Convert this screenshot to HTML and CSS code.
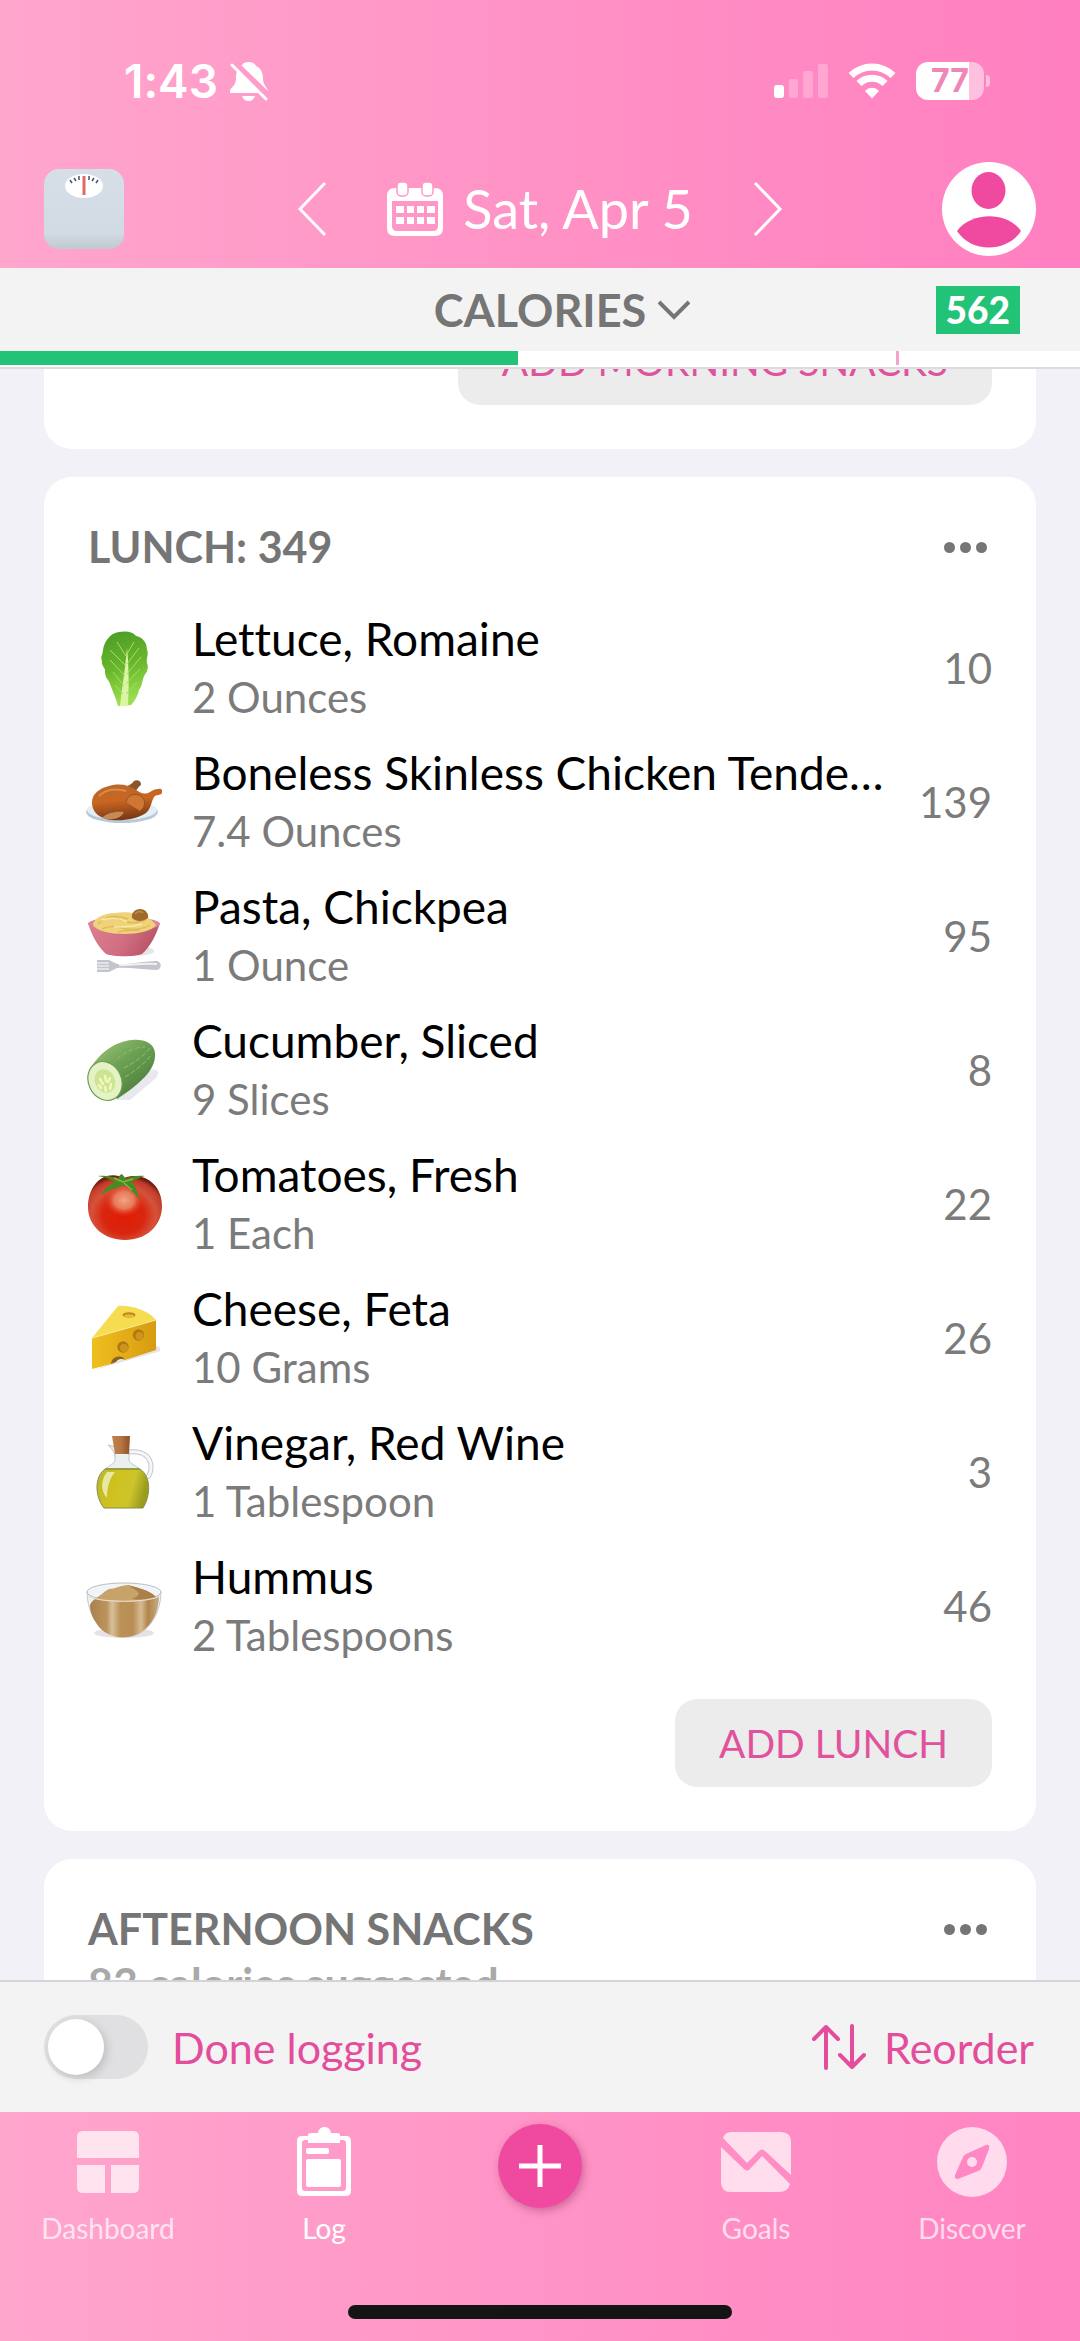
FILE: index.html
```html
<!DOCTYPE html>
<html lang="en">
<head>
  <meta charset="UTF-8" />
  <meta name="viewport" content="width=device-width, initial-scale=1.0"/>
  <title>Food Log</title>
  <link rel="stylesheet" href="styles.css">
</head>
<body>

  <!-- Header -->
  <header class="header">
    <div class="status">
      <span class="time">1:43</span>
      <svg class="bell" width="38" height="40" viewBox="0 0 38 40">
        <path d="M19 1c4 0 6 2 7 4 5 2 7 7 7 13 0 6 4 8 5 12v2H0v-3c2-3 6-5 6-12 0-6 2-11 6-13 1-2 3-3 7-3z" fill="#fff"/>
        <path d="M12 35h13c-1 3-3 5-6.500 5S13 38 12 35z" fill="#fff"/>
        <path d="M3 1l35 34" stroke="#ff9cc9" stroke-width="7"/>
        <path d="M2 4l34 34" stroke="#fff" stroke-width="3" stroke-linecap="round"/>
      </svg>
      <span class="status-right">
        <svg width="54" height="36" viewBox="0 0 54 36" fill="#fff">
          <rect x="0" y="22" width="10" height="13" rx="3"/>
          <g opacity="0.25">
            <rect x="15" y="16" width="9" height="19" rx="2"/>
            <rect x="29" y="8" width="10" height="27" rx="2"/>
            <rect x="44" y="1" width="10" height="34" rx="2"/>
          </g>
        </svg>
        <svg width="48" height="36" viewBox="0 0 48 36" fill="none" stroke="#fff" stroke-width="7">
          <path d="M3 12.500C15 1 33 1 45 12.500"/>
          <path d="M11 20.500c7-7 19-7 26 0"/>
          <path d="M17 28c4-4.500 10-4.500 14 0l-7 7.500z" fill="#fff" stroke="none"/>
        </svg>
        <span class="battery"><span class="battery-body">77</span><span class="battery-tip"></span></span>
      </span>
    </div>

    <div class="date-row">
      <button class="icon-btn left" aria-label="Weigh in">
        <svg width="80" height="80" viewBox="0 0 80 80">
          <defs>
            <linearGradient id="scale" x1="0" y1="0" x2="0" y2="1">
              <stop offset="0" stop-color="#d6dfe8"/><stop offset="0.8" stop-color="#d2dae3"/><stop offset="1" stop-color="#bfcad2"/>
            </linearGradient>
          </defs>
          <rect width="80" height="80" rx="15" fill="url(#scale)"/>
          <ellipse cx="40" cy="17" rx="19" ry="12" fill="#fff"/>
          <path d="M26 11l2 3M30 9l2 3M35 7v4M45 7v4M50 9l-2 3M54 11l-2 3" stroke="#47566a" stroke-width="1.500"/>
          <path d="M40 7v19" stroke="#dc6b67" stroke-width="3"/>
        </svg>
      </button>
      <div class="date-nav">
        <button class="icon-btn" aria-label="Previous day">
          <svg width="30" height="56" viewBox="0 0 30 56" fill="none" stroke="#fff" stroke-width="3"><path d="M28 2L3 28l25 26"/></svg>
        </button>
        <button class="date-btn">
          <svg width="56" height="54" viewBox="0 0 56 54">
            <path d="M8 6h40q8 0 8 8v32q0 8-8 8H8q-8 0-8-8V14q0-8 8-8zM5 19v25q0 5 5 5h36q5 0 5-5V19z" fill="#fff" fill-rule="evenodd"/>
            <rect x="10" y="0" width="11" height="14" rx="4" fill="#fff" stroke="#ff96c7" stroke-width="1.500"/>
            <rect x="35" y="0" width="11" height="14" rx="4" fill="#fff" stroke="#ff96c7" stroke-width="1.500"/>
            <path d="M9 24h8v7H9zM20 24h7v7h-7zM30 24h7v7h-7zM40 24h8v7h-8zM9 35h8v7H9zM20 35h7v7h-7zM30 35h7v7h-7zM40 35h8v7h-8z" fill="#fff"/>
          </svg>
          <span>Sat, Apr 5</span>
        </button>
        <button class="icon-btn" aria-label="Next day">
          <svg width="30" height="56" viewBox="0 0 30 56" fill="none" stroke="#fff" stroke-width="3"><path d="M2 2l25 26L2 54"/></svg>
        </button>
      </div>
      <button class="icon-btn right" aria-label="Profile">
        <svg width="94" height="94" viewBox="0 0 94 94">
          <circle cx="47" cy="47" r="47" fill="#fff"/>
          <ellipse cx="46.500" cy="28.500" rx="17" ry="18.500" fill="#ef4a9f"/>
          <path d="M15 69C29 50 65 49 79 69 65 91 29 91 15 69z" fill="#ef4a9f"/>
        </svg>
      </button>
    </div>
  </header>

  <!-- Calories summary -->
  <section class="summary">
    <div class="summary-row">
      <button class="nutrient">
        CALORIES
        <svg width="32" height="20" viewBox="0 0 32 20" fill="none" stroke="#757575" stroke-width="4"><path d="M1 2l15 15L31 2"/></svg>
      </button>
      <span class="badge">562</span>
    </div>
    <div class="progress">
      <div class="progress-fill" style="width: 48%"></div>
      <div class="progress-mark"></div>
    </div>
  </section>

  <!-- Meals -->
  <main class="meals">
    <section class="card scrolled">
      <div class="card-foot"><button class="add">ADD MORNING SNACKS</button></div>
    </section>

    <section class="card">
      <div class="card-head">
        <h2>LUNCH: 349</h2>
        <button class="dots" aria-label="Lunch options"><i></i><i></i><i></i></button>
      </div>
      <ul class="foods">
        <li class="food">
          <svg class="food-icon" viewBox="0 0 76 76">
            <defs>
              <linearGradient id="leaf" x1="0" y1="0" x2="0.200" y2="1">
                <stop offset="0" stop-color="#4a9a26"/><stop offset="0.550" stop-color="#69b72c"/><stop offset="1" stop-color="#9ade50"/>
              </linearGradient>
            </defs>
            <path d="M33 2c6-1 13-1 17 4 6 1 11 6 11 14 2 4-1 8 0 13 2 5 0 9-3 13-2 6-2 10-5 14-1 6-5 12-8 15l-13 1c-2-8-6-16-8-22-1-4-5-6-5-12 1-4-4-6-3-11-2-4 1-7 1-11C18 12 24 3 33 2z" fill="url(#leaf)"/>
            <path d="M34 76c2-18 5-35 7-58 2 18 2 40 1 58z" fill="#dcf5a4"/>
            <path d="M40 64l11-12M40 54l14-15M41 44l14-17M41 34l12-16M41 24l7-12M38 56L27 42M39 46L24 30M40 36L24 20M40 26l-9-14M37 64l-8-9" stroke="#a9dd6c" stroke-width="1" fill="none"/>
          </svg>
          <div class="food-text"><h3>Lettuce, Romaine</h3><p>2 Ounces</p></div>
          <span class="cals">10</span>
        </li>
        <li class="food">
          <svg class="food-icon" viewBox="0 0 76 76">
            <defs>
              <linearGradient id="bird" x1="0" y1="0" x2="0.200" y2="1">
                <stop offset="0" stop-color="#b9682c"/><stop offset="0.500" stop-color="#c96621"/><stop offset="1" stop-color="#7d3a17"/>
              </linearGradient>
            </defs>
            <ellipse cx="36" cy="48" rx="36" ry="11" fill="#b9cad6"/>
            <ellipse cx="36" cy="46" rx="35" ry="10" fill="#e4eef5"/>
            <path d="M34 24c6-1 11-3 14-7 3-2 7 0 7 3 0 2-2 2-3 4-3 4-5 6-9 8z" fill="#8c552e"/>
            <path d="M6 40c-1-10 8-16 17-18 11-3 20-1 27 4 5 3 8 5 14 2 3-2 5-3 8-3 3-1 5 1 4 4-2 3-5 1-8 4-3 5-3 12-8 16-9 6-22 8-34 7C14 55 7 49 6 40z" fill="url(#bird)"/>
            <path d="M40 38c1-7 9-10 15-6 5 4 5 11-1 15" fill="#cf7634" stroke="#95501f" stroke-width="1"/>
            <path d="M16 54c4-5 14-7 22-6-3 6-10 9-22 6z" fill="#c58a58"/>
            <path d="M13 32c7-7 18-8 27-5" stroke="#dc8b47" stroke-width="2" fill="none"/>
          </svg>
          <div class="food-text"><h3>Boneless Skinless Chicken Tende…</h3><p>7.4 Ounces</p></div>
          <span class="cals">139</span>
        </li>
        <li class="food">
          <svg class="food-icon" viewBox="0 0 76 76">
            <defs>
              <linearGradient id="bowl" x1="0" y1="0" x2="1" y2="0.300">
                <stop offset="0" stop-color="#dc7e8f"/><stop offset="0.600" stop-color="#d16f82"/><stop offset="1" stop-color="#b95468"/>
              </linearGradient>
            </defs>
            <ellipse cx="50" cy="53" rx="18" ry="5" fill="#e6e6e8"/>
            <path d="M2 25c4 14 12 26 18 31 8 3 28 3 36 0 7-6 14-18 18-31z" fill="url(#bowl)"/>
            <ellipse cx="38" cy="26" rx="36" ry="7" fill="#d98797"/>
            <path d="M7 27c0-6 10-12 22-12 10-2 24 0 30 4 5 1 9 5 11 8-8 12-56 12-63 0z" fill="#efd279"/>
            <path d="M12 26c7-8 17-7 23-4s15 4 24 0M16 31c10-5 18-1 25 0s17 0 23-4M20 20c8-3 15-2 22 1M32 34c8-2 14-2 22-2" stroke="#dfbb5c" stroke-width="1.500" fill="none"/>
            <path d="M15 22c9-2 17-3 26 2M28 29c8 0 20 0 28-3" stroke="#fbeaa5" stroke-width="1.500" fill="none"/>
            <path d="M46 20c-1-5 3-9 8-9s9 4 8 9c-5 4-12 4-16 0z" fill="#a2692c"/>
            <path d="M49 16c2-3 6-3 8-1" stroke="#c38e4c" stroke-width="1.500" fill="none"/>
            <path d="M11 62h12l8 4c12 1 26-3 40-3 5 1 5 8 0 9-14 0-28-3-40-2l-8 4H11z" fill="#c3c4cc"/>
            <path d="M11 65h12M11 68h12M11 71h12" stroke="#fff" stroke-width="1.200"/>
            <path d="M33 67c12 0 24-2 38-1" stroke="#f1f1f5" stroke-width="2" fill="none"/>
          </svg>
          <div class="food-text"><h3>Pasta, Chickpea</h3><p>1 Ounce</p></div>
          <span class="cals">95</span>
        </li>
        <li class="food">
          <svg class="food-icon" viewBox="0 0 76 76">
            <defs>
              <linearGradient id="cuke" x1="0" y1="0" x2="0.800" y2="1">
                <stop offset="0" stop-color="#a5c97e"/><stop offset="0.450" stop-color="#6da255"/><stop offset="1" stop-color="#477a38"/>
              </linearGradient>
            </defs>
            <path d="M30 68l34-30c8-2 10 2 6 8L44 68z" fill="#e9e8ee"/>
            <path d="M5 36C13 21 30 9 46 8c12-1 22 3 23 13 1 14-9 27-38 46z" fill="url(#cuke)"/>
            <path d="M31 27c8-7 17-12 28-12M38 36c9-5 19-11 26-20M39 45c10-6 20-14 27-23" stroke="#93bb74" stroke-width="1" fill="none" stroke-dasharray="5 2"/>
            <ellipse cx="19" cy="49" rx="16.500" ry="20" transform="rotate(-25 19 49)" fill="#e4f2c6" stroke="#6f9b54" stroke-width="1.200"/>
            <ellipse cx="19" cy="49" rx="10" ry="12" transform="rotate(-25 19 49)" fill="#cde492"/>
            <path d="M14 47l3 5M19 44l1 5M24 46l-2 4M19 55l1 4M25 52l-1 5M13 53l2 3" stroke="#f3f7bd" stroke-width="2.500" stroke-linecap="round"/>
          </svg>
          <div class="food-text"><h3>Cucumber, Sliced</h3><p>9 Slices</p></div>
          <span class="cals">8</span>
        </li>
        <li class="food">
          <svg class="food-icon" viewBox="0 0 76 76">
            <defs>
              <radialGradient id="tomato" cx="0.480" cy="0.620" r="0.620">
                <stop offset="0" stop-color="#e01c05"/><stop offset="0.450" stop-color="#d9260f"/><stop offset="0.700" stop-color="#d5523b"/><stop offset="0.900" stop-color="#c13c28"/><stop offset="1" stop-color="#6e1b11"/>
              </radialGradient>
              <radialGradient id="shine" cx="0.500" cy="0.450" r="0.500">
                <stop offset="0" stop-color="#f2a585"/><stop offset="0.500" stop-color="#ec8e6d" stop-opacity="0.800"/><stop offset="1" stop-color="#e0280f" stop-opacity="0"/>
              </radialGradient>
            </defs>
            <path d="M38 12c18-7 38 5 38 28 0 20-16 34-37 34S2 60 2 41C2 17 20 3 38 12z" fill="url(#tomato)"/>
            <ellipse cx="38" cy="36" rx="20" ry="17" fill="url(#shine)"/>
            <path d="M12 10c9-1 16 1 21 3-1-2 0-4 3-5l4 5c5-3 12-4 19-3-5 1-9 4-14 6 4 3 7 8 8 18-4-7-9-11-15-15-6 3-14 4-23 10 4-7 9-10 14-13-5-3-10-5-17-6z" fill="#478b22"/>
            <path d="M28 12l9 4 10-3M38 17l8 7" stroke="#82b743" stroke-width="1.500" fill="none"/>
          </svg>
          <div class="food-text"><h3>Tomatoes, Fresh</h3><p>1 Each</p></div>
          <span class="cals">22</span>
        </li>
        <li class="food">
          <svg class="food-icon" viewBox="0 0 76 76">
            <defs>
              <linearGradient id="cheese" x1="0" y1="0" x2="1" y2="0">
                <stop offset="0" stop-color="#efbf1f"/><stop offset="1" stop-color="#d79b12"/>
              </linearGradient>
            </defs>
            <path d="M8 70l62-24c5 1 6 4 2 6z" fill="#e6e5ea"/>
            <path d="M6 38L32 6c12-1 30 4 38 14z" fill="#f6dc51"/>
            <path d="M6 38l64-18v30l-31 10c-1-5-14-3-14 4L6 69z" fill="url(#cheese)"/>
            <path d="M6 38l64-18" stroke="#fae98c" stroke-width="1.200"/>
            <ellipse cx="43" cy="15" rx="6.500" ry="2.800" fill="#bb891b"/>
            <ellipse cx="43" cy="16" rx="5" ry="1.800" fill="#e7bd37"/>
            <circle cx="52.500" cy="35" r="5.700" fill="#b17812"/><circle cx="53.500" cy="36" r="4" fill="#cd961b"/>
            <circle cx="37" cy="47" r="5.700" fill="#b17812"/><circle cx="38" cy="48" r="4" fill="#cd961b"/>
            <path d="M25 64c0-8 12-10 14-4-3-2-7-1-9 2z" fill="#8e6218"/>
          </svg>
          <div class="food-text"><h3>Cheese, Feta</h3><p>10 Grams</p></div>
          <span class="cals">26</span>
        </li>
        <li class="food">
          <svg class="food-icon" viewBox="0 0 76 76">
            <defs>
              <linearGradient id="oil" x1="0" y1="0" x2="1" y2="0.200">
                <stop offset="0" stop-color="#b9b532"/><stop offset="0.400" stop-color="#d0c21d"/><stop offset="0.750" stop-color="#cdc42c"/><stop offset="1" stop-color="#9a9d1c"/>
              </linearGradient>
              <linearGradient id="cork" x1="0" y1="0" x2="1" y2="0">
                <stop offset="0" stop-color="#c1824e"/><stop offset="0.500" stop-color="#b87540"/><stop offset="1" stop-color="#8d5228"/>
              </linearGradient>
            </defs>
            <path d="M43 18c14-2 22 5 22 15 0 5-1 8-4 11" fill="none" stroke="#c3c7cd" stroke-width="5"/>
            <path d="M43 18c14-2 22 5 22 15 0 5-1 8-4 11" fill="none" stroke="#f5f6f8" stroke-width="3"/>
            <path d="M22 11l8 2v12c-1-6-3-9-8-14z" fill="#e8ebee" stroke="#bfc4ca" stroke-width="1"/>
            <path d="M29 18h14v8c1 4 6 5 11 9H19c5-4 9-5 10-9z" fill="#eceff0" stroke="#bec5c7" stroke-width="1"/>
            <path d="M19 35h35c12 8 10 28 3 39H18C9 63 8 43 19 35z" fill="url(#oil)" stroke="#858f46" stroke-width="1"/>
            <path d="M21 38h8c-6 7-8 17-8 26-7-8-6-18 0-26z" fill="#edf0b6" opacity="0.850"/>
            <path d="M20 35h33" stroke="#8f9a36" stroke-width="1.500"/>
            <path d="M26 2h18l-1 18H29z" fill="url(#cork)"/>
          </svg>
          <div class="food-text"><h3>Vinegar, Red Wine</h3><p>1 Tablespoon</p></div>
          <span class="cals">3</span>
        </li>
        <li class="food">
          <svg class="food-icon" viewBox="0 0 76 76">
            <defs>
              <linearGradient id="hummus" x1="0" y1="0" x2="1" y2="0">
                <stop offset="0" stop-color="#a98150"/><stop offset="0.240" stop-color="#bb935c"/><stop offset="0.320" stop-color="#d9c09a"/><stop offset="0.440" stop-color="#bb9157"/><stop offset="0.620" stop-color="#b88e55"/><stop offset="0.740" stop-color="#d6bb94"/><stop offset="0.840" stop-color="#b1854b"/><stop offset="1" stop-color="#c9ab7e"/>
              </linearGradient>
            </defs>
            <ellipse cx="38" cy="65" rx="30" ry="5" fill="#e6e1e4"/>
            <path d="M1 23c0 24 14 46 37 46s37-22 37-46c-8 12-66 12-74 0z" fill="#eef1f3" stroke="#c4c9cf" stroke-width="1"/>
            <path d="M4 37c1-3 4-6 8-8 14 6 42 6 61-1 0 12-4 22-10 29-11 15-37 17-50 2C7 51 4 45 4 37z" fill="url(#hummus)"/>
            <ellipse cx="38" cy="24" rx="37" ry="9" fill="#f1f5f7" stroke="#b6bfc7" stroke-width="1"/>
            <path d="M8 31c7-3 10-8 15-10 6 0 12-4 19-4 9 3 20 4 28 12-13 6-47 6-62 2z" fill="#c7a269"/>
            <path d="M42 17c9 3 20 4 28 12-8 2-18 3-24 2 8-3 9-6 2-10z" fill="#aa8049"/>
            <path d="M2 28c14 7 58 7 72 0" stroke="#e9dfcf" stroke-width="1.200" fill="none"/>
          </svg>
          <div class="food-text"><h3>Hummus</h3><p>2 Tablespoons</p></div>
          <span class="cals">46</span>
        </li>
      </ul>
      <div class="card-foot"><button class="add">ADD LUNCH</button></div>
    </section>

    <section class="card">
      <div class="card-head">
        <h2>AFTERNOON SNACKS</h2>
        <button class="dots" aria-label="Afternoon snacks options"><i></i><i></i><i></i></button>
      </div>
      <p class="suggested">83 calories suggested</p>
    </section>
  </main>

  <!-- Log actions -->
  <div class="actions">
    <label class="done"><input type="checkbox" class="switch"> Done logging</label>
    <button class="reorder">
      <svg width="54" height="46" viewBox="0 0 54 46" fill="none" stroke="#e44c9c" stroke-width="4" stroke-linecap="round" stroke-linejoin="round">
        <path d="M14 44V3M2 15L14 3l12 12M40 2v41M28 31l12 12 12-12"/>
      </svg>
      Reorder
    </button>
  </div>

  <!-- Bottom tabs -->
  <footer class="footer">
    <nav class="tabs">
      <a href="#" class="tab">
        <svg width="72" height="72" viewBox="0 0 72 72" fill="#fff">
          <path d="M11 5h50q6 0 6 6v21H5V11q0-6 6-6zM5 39h28v28H11q-6 0-6-6zM39 39h28v22q0 6-6 6H39z"/>
        </svg>
        Dashboard
      </a>
      <a href="#" class="tab active">
        <svg width="72" height="72" viewBox="0 0 72 72" fill="#fff">
          <path d="M14 10h44q5 0 5 5v50q0 5-5 5H14q-5 0-5-5V15q0-5 5-5zm3 4q-3 0-3 3v45q0 3 3 3h38q3 0 3-3V17q0-3-3-3z" fill-rule="evenodd"/>
          <path d="M20 17V9q0-2 3-2h7c1-8 12-8 13 0h6q3 0 3 2v8z"/>
          <rect x="18" y="22" width="23" height="6" rx="2"/>
          <rect x="18" y="33" width="35" height="28" rx="2"/>
        </svg>
        Log
      </a>
      <button class="plus" aria-label="Add food">
        <svg width="42" height="42" viewBox="0 0 42 42" stroke="#fff" stroke-width="5"><path d="M21 0v42M0 21h42"/></svg>
      </button>
      <a href="#" class="tab">
        <svg width="72" height="72" viewBox="0 0 72 72" fill="#fff">
          <path d="M3 12Q5 6 11 6h50q10 0 10 10v33L45 25q-3-3-6 0L27 37z"/>
          <path d="M1 21l23 22q3 3 6 0l12-13 28 28q-2 8-11 8H11Q1 66 1 56z"/>
        </svg>
        Goals
      </a>
      <a href="#" class="tab">
        <svg width="72" height="72" viewBox="0 0 72 72" fill="#fff">
          <path fill-rule="evenodd" d="M36 1a35 35 0 1 0 0 70 35 35 0 0 0 0-70zM30 28q-2 1-3 3l-8 18q-1 4 3 4l20-8q3-1 4-4l7-18q1-5-3-4z"/>
          <circle cx="36" cy="36" r="5"/>
        </svg>
        Discover
      </a>
    </nav>
    <div class="home-bar"></div>
  </footer>

</body>
</html>
```

FILE: styles.css
```css
* { box-sizing: border-box; }
body {
  margin: 0; height: 100vh; display: flex; flex-direction: column;
  font-family: Lato, "Noto Sans", sans-serif; background: #f2f1f8; color: #000;
  font-variant-ligatures: none;
}
button {
  border: none; background: none; padding: 0; margin: 0;
  font-family: inherit; color: inherit; cursor: pointer;
}
h2, h3, p, ul { margin: 0; padding: 0; }
svg { display: block; flex-shrink: 0; }

/* Header */
.header {
  background: linear-gradient(90deg, #ffa6cd, #ff92c5 50%, #ff7fc0);
  color: #fff; padding: 44px 44px 12px; flex-shrink: 0;
}
.status {
  display: flex; align-items: center; height: 74px; margin-bottom: 44px;
  padding: 0 46px 0 80px; font-family: Inter, sans-serif;
}
.time { font-size: 46px; font-weight: 600; margin-right: 12px; }
.status-right { display: flex; align-items: center; gap: 20px; margin-left: auto; }
.battery { display: flex; align-items: center; gap: 2px; }
.battery-body {
  width: 68px; height: 38px; border-radius: 12px; line-height: 38px;
  background: linear-gradient(90deg, #fff 78%, #ffbfdf 78%);
  color: #ef86b6; font-size: 32px; font-weight: 700; text-align: center;
}
.battery-tip { width: 4px; height: 12px; border-radius: 0 4px 4px 0; background: #ffbfdf; }
.date-row { display: grid; grid-template-columns: 1fr auto 1fr; align-items: center; height: 94px; }
.left { justify-self: start; }
.right { justify-self: end; }
.date-nav { display: flex; align-items: center; gap: 60px; }
.date-btn { display: flex; align-items: center; gap: 20px; font-size: 54px; line-height: 64px; }

/* Calories summary */
.summary { background: #f3f3f3; border-bottom: 2px solid #dcdbe0; flex-shrink: 0; }
.summary-row {
  display: grid; grid-template-columns: 1fr auto 1fr; align-items: center;
  height: 83px; padding: 0 60px;
}
.nutrient {
  grid-column: 2; display: flex; align-items: center; gap: 12px; padding-left: 44px;
  font-size: 45px; line-height: 54px; font-weight: 700; color: #757575;
}
.badge {
  justify-self: end; background: #22c377; color: #fff; padding: 0 10px;
  font-size: 37px; font-weight: 900; line-height: 48px;
}
.progress { position: relative; height: 16px; background: #fff; }
.progress-fill { height: 14px; background: #22c377; }
.progress-mark { position: absolute; top: 0; left: 83%; width: 3px; height: 14px; background: #f5a3cb; }

/* Meals */
.meals {
  flex: 1; min-height: 0; overflow: hidden; padding: 0 44px;
  display: flex; flex-direction: column; gap: 28px;
}
.card { background: #fff; border-radius: 28px; padding: 44px; flex-shrink: 0; }
.scrolled { margin-top: -72px; padding-top: 20px; }
.card-head {
  display: flex; justify-content: space-between; align-items: center; height: 52px;
}
.card-head h2 { font-size: 43px; line-height: 52px; font-weight: 700; color: #757575; }
.dots { display: flex; gap: 5px; padding: 20px 5px; }
.dots i { width: 11px; height: 11px; border-radius: 50%; background: #757575; }
.foods { list-style: none; padding: 28px 0 26px; }
.food { display: flex; align-items: center; height: 134px; }
.food-icon { width: 76px; height: 76px; margin: 0 30px 0 -2px; }
.food-text { flex: 1; min-width: 0; line-height: 58px; white-space: nowrap; }
.food-text h3 { font-size: 46px; font-weight: 400; line-height: 58px; }
.food-text p { font-size: 42px; color: #7b7b7b; }
.cals { font-size: 42px; color: #7b7b7b; }
.card-foot { display: flex; justify-content: flex-end; }
.add {
  height: 88px; padding: 0 44px; border-radius: 22px; background: #ececec;
  font-size: 39px; color: #e0529c;
}
.suggested { font-size: 43px; font-weight: 700; line-height: 58px; color: #a9a9a9; }

/* Log actions */
.actions {
  display: flex; justify-content: space-between; align-items: center; flex-shrink: 0;
  height: 132px; padding: 0 46px 0 44px;
  background: #f3f3f3; border-top: 2px solid #d4d3d8; color: #e44c9c; font-size: 43px;
}
.done { display: flex; align-items: center; gap: 24px; }
.switch {
  appearance: none; width: 104px; height: 64px; margin: 0; padding: 4px;
  border-radius: 32px; background: #e0e0e3;
}
.switch::before {
  content: ""; display: block; width: 56px; height: 56px; border-radius: 50%;
  background: #fff; box-shadow: 3px 3px 10px rgba(0, 0, 0, 0.15);
}
.switch:checked { background: #ef4a9f; }
.switch:checked::before { margin-left: auto; }
.reorder { display: flex; align-items: center; gap: 18px; font-size: 43px; }

/* Bottom tabs */
.footer {
  background: linear-gradient(90deg, #ffa6cd, #ff94c6 50%, #ff84c2);
  height: 229px; padding: 12px 0 22px; flex-shrink: 0;
  display: flex; flex-direction: column; justify-content: space-between; align-items: center;
}
.tabs { display: grid; grid-template-columns: repeat(5, 1fr); justify-items: center; width: 100%; }
.tab {
  display: flex; flex-direction: column; align-items: center; gap: 12px; padding-top: 2px;
  color: #fff; font-size: 28px; line-height: 36px; text-decoration: none; opacity: 0.7;
}
.tab.active { opacity: 1; }
.plus {
  width: 84px; height: 84px; border-radius: 50%; background: #ef4a9f;
  display: flex; align-items: center; justify-content: center;
  box-shadow: 2px 3px 8px rgba(130, 40, 90, 0.4);
}
.home-bar { width: 384px; height: 14px; border-radius: 7px; background: #141414; }
```
